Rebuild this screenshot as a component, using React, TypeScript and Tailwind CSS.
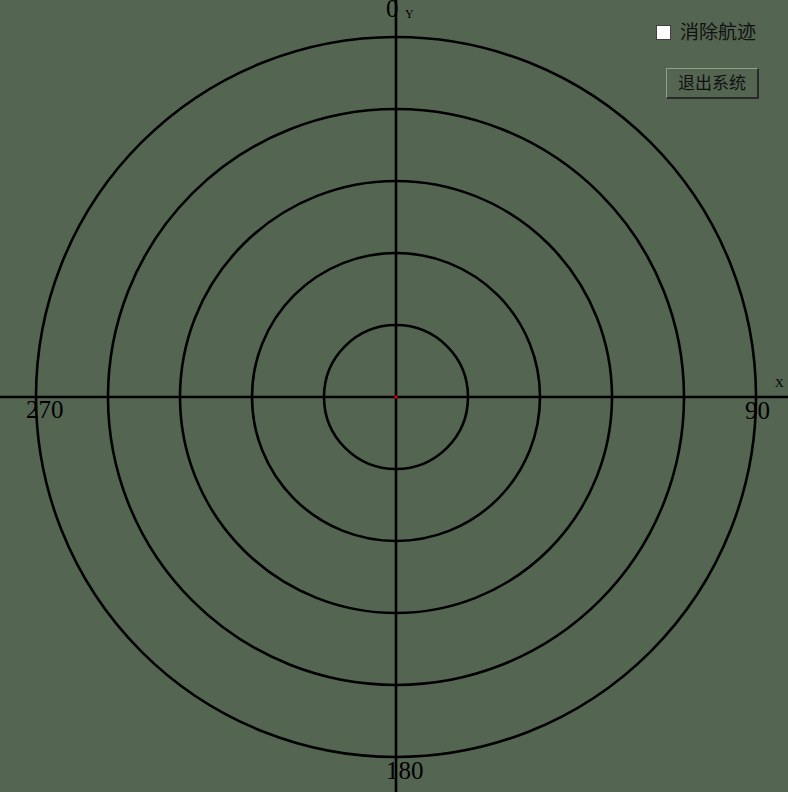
import React from "react";

export default function App() {
  const cx = 396;
  const cy = 397;
  const radii = [72, 144, 216, 288, 360];
  return (
    <div className="relative w-[788px] h-[792px] overflow-hidden bg-[#546552]">
      <svg width="788" height="792" viewBox="0 0 788 792" className="block">
        {radii.map((r) => (
          <circle key={r} cx={cx} cy={cy} r={r} fill="none" stroke="#000" strokeWidth="2.6" />
        ))}
        <line x1={cx} y1={0} x2={cx} y2={792} stroke="#000" strokeWidth="2.6" />
        <line x1={0} y1={cy} x2={788} y2={cy} stroke="#000" strokeWidth="2.6" />
        <rect x={cx - 1.5} y={cy - 1.5} width="3" height="3" fill="#e00000" />
        <g fontFamily="'Liberation Serif', 'DejaVu Serif', serif" fill="#000">
          <text x="386" y="17" fontSize="25">0</text>
          <text x="405" y="18" fontSize="12">Y</text>
          <text x="26" y="418" fontSize="25">270</text>
          <text x="745" y="419" fontSize="25">90</text>
          <text x="775" y="387" fontSize="12">X</text>
          <text x="386" y="779" fontSize="25">180</text>
        </g>
      </svg>
      <label className="absolute left-[656px] top-[21px] flex items-start gap-[9px] text-[19px] leading-none text-[#111] font-['Noto_Sans_CJK_SC',sans-serif]">
        <span className="block mt-[4px] w-[15px] h-[15px] bg-white border border-[#404040]" />
        <span>消除航迹</span>
      </label>
      <div className="absolute left-[666px] top-[68px] w-[93px] h-[31px] flex items-center justify-center pb-[3px] border-t border-l border-[#8fa08c] border-b-2 border-r-2 border-b-[#2a2a2a] border-r-[#2a2a2a] text-[17px] leading-none text-[#111] font-['Noto_Sans_CJK_SC',sans-serif]">
        退出系统
      </div>
    </div>
  );
}
